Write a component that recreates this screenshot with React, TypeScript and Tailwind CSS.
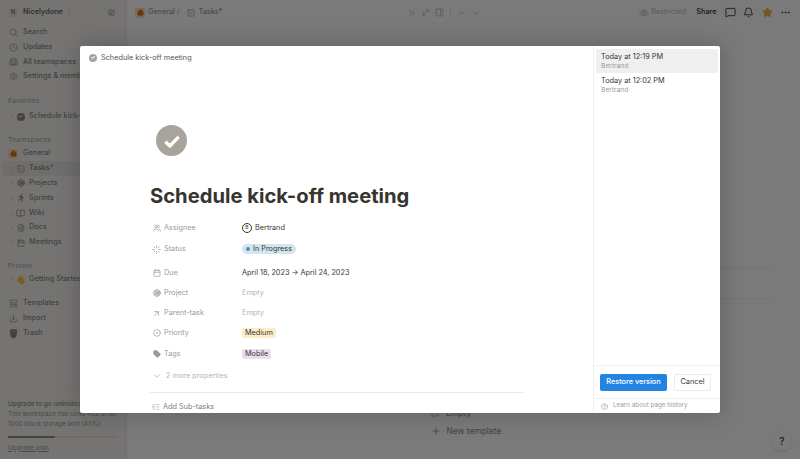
import React from 'react';
import {
  ArrowUpRight, Bell, ChevronDown, ChevronRight, ChevronUp, ChevronsRight, ChevronsUpDown, Download,
  Calendar, CircleHelp, Clock, Ellipsis, Eye, BookOpen, FileText, Home, Loader, MessageSquare,
  PanelRight, Plus, Search, Settings, SquareCheck, SquarePen, Star, Tag, Users, Building2, ListTree,
  MoveDiagonal, Target, LayoutTemplate, Square, CircleDot,
} from 'lucide-react';
import { FaRunning } from 'react-icons/fa';
import { BsTrash2Fill } from 'react-icons/bs';

const NavRow = ({ icon: Icon, label }: { icon: any; label: string }) => (
  <div className="flex h-[14.8px] items-center gap-[5px] pl-[9px]">
    <Icon size={9} strokeWidth={1.7} className="shrink-0 text-[#8c8b87]" />
    <span className="whitespace-nowrap font-medium text-[#8c8b87]">{label}</span>
  </div>
);

const TreeRow = ({ icon, label, active }: { icon: React.ReactNode; label: string; active?: boolean }) => (
  <div className={`flex h-[14.8px] items-center ${active ? 'mx-[2px] rounded-[2px] bg-[#e8e7e4] pl-[6px] font-semibold' : 'pl-[8px] font-medium'}`}>
    <ChevronRight size={7} strokeWidth={2} className="shrink-0 text-[#b5b4b0]" />
    <span className="mr-[3px] flex w-[11px] shrink-0 justify-center">{icon}</span>
    <span className="whitespace-nowrap text-[#8c8b87]">{label}</span>
  </div>
);

const SectionLabel = ({ children, className }: { children: string; className: string }) => (
  <div className={`pl-[8px] text-[6.8px] font-medium tracking-[0.2px] text-[#b0afab] ${className}`}>{children}</div>
);

const Property = ({ icon, label, children, className = '' }: { icon: React.ReactNode; label: string; children: React.ReactNode; className?: string }) => (
  <div className={`flex h-[20px] items-center ${className}`}>
    <div className="flex w-[92px] shrink-0 items-center gap-[3px] pl-[2px] text-[#9b9a97]">
      <span className="flex w-[9px] justify-center">{icon}</span>
      <span>{label}</span>
    </div>
    <div className="flex items-center">{children}</div>
  </div>
);

export default function App() {
  const iconGrey = 'text-[#b5b4b0]';
  const sideIcon = 'text-[#8c8b87]';
  return (
    <div className="relative flex h-[459px] w-[800px] overflow-hidden bg-white text-[7.3px] text-[#37352f] [font-family:Inter,'Liberation_Sans',sans-serif]">
      {/* sidebar */}
      <aside className="flex h-full w-[127px] shrink-0 flex-col border-r border-[#ecebe8] bg-[#f4f3f0]">
        <div className="flex h-[25px] items-center pl-[9px] pr-[7px]">
          <span className="mr-[6px] flex h-[8px] w-[8px] items-center justify-center rounded-[1px] bg-[#e3e2de] text-[5.5px] font-medium text-[#6b6a67]">N</span>
          <span className="font-semibold text-[#6e6d69]">Nicelydone</span>
          <ChevronsUpDown size={7} className="ml-[3px] text-[#b5b4b0]" />
          <span className="ml-auto flex h-[16px] w-[16px] items-center justify-center rounded-full border border-[#ecebe8]">
            <SquarePen size={7} className="text-[#6e6d69]" />
          </span>
        </div>
        <NavRow icon={Search} label="Search" />
        <NavRow icon={Clock} label="Updates" />
        <NavRow icon={Building2} label="All teamspaces" />
        <NavRow icon={Settings} label="Settings & members" />
        <SectionLabel className="mb-[2px] mt-[11px] h-[12px] leading-[12px]">Favorites</SectionLabel>
        <TreeRow icon={<span className="flex h-[8px] w-[8px] items-center justify-center rounded-full bg-[#8c8b87] text-[5px] font-bold text-white">✓</span>} label="Schedule kick-off meeting" />
        <SectionLabel className="mb-[0.5px] mt-[10px] h-[12px] leading-[12px]">Teamspaces</SectionLabel>
        <div className="flex h-[14.8px] items-center pl-[8px]">
          <span className="mr-[5px] flex h-[10px] w-[10px] items-center justify-center rounded-[2px] bg-[#fbdcc0]"><Home size={7} fill="#d9730d" className="text-[#d9730d]" /></span>
          <span className="font-medium text-[#8c8b87]">General</span>
        </div>
        <TreeRow active icon={<SquareCheck size={8} className={sideIcon} />} label="Tasks*" />
        <TreeRow icon={<Target size={8} strokeWidth={2.6} className={sideIcon} />} label="Projects" />
        <TreeRow icon={<FaRunning size={8} className={sideIcon} />} label="Sprints" />
        <TreeRow icon={<BookOpen size={9} className={sideIcon} />} label="Wiki" />
        <TreeRow icon={<FileText size={8} className={sideIcon} />} label="Docs" />
        <TreeRow icon={<Calendar size={8} className={sideIcon} />} label="Meetings" />
        <SectionLabel className="mb-[0.5px] mt-[10px] h-[12px] leading-[12px]">Private</SectionLabel>
        <TreeRow icon={<span className="text-[8px] leading-none">👋</span>} label="Getting Started" />
        <div className="h-[9px]" />
        <NavRow icon={LayoutTemplate} label="Templates" />
        <NavRow icon={Download} label="Import" />
        <NavRow icon={BsTrash2Fill} label="Trash" />
        <div className="mt-auto h-[70px] border-t border-[#ecebe8] px-[8px] pt-[9px] text-[6.4px] text-[#9b9a97]">
          <div className="font-medium leading-[10px] text-[#8c8b87]">Upgrade to go unlimited</div>
          <div className="mt-[1px] leading-[9.5px]">This workspace has used 432 of its 1000 block storage limit (43%).</div>
          <div className="mt-[6.5px] h-[2px] w-full rounded-full bg-[#e3e2de]">
            <div className="h-full w-[43%] rounded-full bg-[#8c8b87]" />
          </div>
          <div className="mt-[6px] underline">Upgrade plan</div>
        </div>
      </aside>

      {/* page behind the dialog */}
      <main className="flex min-w-0 flex-1 flex-col">
        <header className="flex h-[25px] items-center pl-[8px]">
          <span className="mr-[3px] flex h-[10px] w-[10px] items-center justify-center rounded-[2px] bg-[#fbdcc0]"><Home size={7} fill="#d9730d" className="text-[#d9730d]" /></span>
          <span className="text-[#8c8b87]">General</span>
          <span className="mx-[2px] text-[#b5b4b0]">/</span>
          <SquareCheck size={8} className="ml-[5px] mr-[4px] text-[#8c8b87]" />
          <span className="text-[#8c8b87]">Tasks*</span>
          <div className="ml-auto flex items-center">
            <ChevronsRight size={10} className={iconGrey} />
            <MoveDiagonal size={9} className={`ml-[4.5px] ${iconGrey}`} />
            <PanelRight size={9} className={`ml-[5px] ${iconGrey}`} />
            <span className="mx-[6px] h-[8px] w-px bg-[#e3e2de]" />
            <ChevronUp size={10} className={iconGrey} />
            <ChevronDown size={10} className={`ml-[4px] ${iconGrey}`} />
          </div>
          <div className="ml-[158px] flex items-center pr-[9px]">
            <Eye size={10} className={iconGrey} />
            <span className="ml-[2px] w-[35px] whitespace-nowrap text-[#bebdb9]">Restricted</span>
            <span className="ml-[10px] font-medium">Share</span>
            <MessageSquare size={11} className="ml-[8.5px] text-[#37352f]" />
            <Bell size={11} className="ml-[7px] text-[#37352f]" />
            <Star size={11} fill="#e9b949" className="ml-[8px] text-[#e9b949]" />
            <Ellipsis size={11} className="ml-[7px] text-[#37352f]" />
          </div>
        </header>
        <div className="ml-[273px] mr-[27px] mt-[242px] h-[32px] border-y border-[#f4f3f1]" />
        <div className="mb-[19px] mt-auto pl-[304px] text-[8.4px] text-[#8c8b87]">
          <div className="flex h-[18px] items-center gap-[7px]"><Square size={8} /><span>Empty</span></div>
          <div className="flex h-[18px] items-center gap-[5.5px]"><Plus size={10} /><span>New template</span></div>
        </div>
      </main>
      <button className="absolute left-[772px] top-[431px] flex h-[20px] w-[20px] items-center justify-center rounded-full bg-white/20 text-[10px] font-medium text-[#37352f] shadow-sm">?</button>

      {/* scrim */}
      <div className="absolute inset-0 bg-black/[0.52]" />

      {/* version history dialog */}
      <div className="absolute left-[80px] top-[46px] flex h-[367px] w-[640px] rounded-[2px] bg-white shadow-[0_0_24px_rgba(0,0,0,0.22)]">
        <section className="relative min-w-0 flex-1 overflow-hidden">
          <div className="flex h-[23px] items-center pl-[9px] pt-[1px] text-[#55534e]">
            <span className="mr-[4px] flex h-[8px] w-[8px] items-center justify-center rounded-full bg-[#a8a49c] text-[5px] font-bold text-white">✓</span>
            <span>Schedule kick-off meeting</span>
          </div>
          <div className="pl-[70px] pr-[69px]">
            <div className="ml-[6px] mt-[56px] flex h-[31px] w-[31px] items-center justify-center rounded-full bg-[#a8a49c]">
              <svg viewBox="0 0 24 24" width="20" height="20" fill="none" stroke="white" strokeWidth="4"><path d="M4 13l5.5 5L20 7" /></svg>
            </div>
            <h1 className="mt-[26px] h-[28px] whitespace-nowrap text-[20.2px] font-bold leading-[28px] text-[#37352f]">Schedule kick-off meeting</h1>
            <div className="mt-[8px]">
              <Property label="Assignee" icon={<Users size={8} />}>
                <span className="mr-[3px] flex h-[10px] w-[10px] items-center justify-center rounded-full border border-[#37352f] text-[5px]">B</span>
                <span className="text-[#37352f]">Bertrand</span>
              </Property>
              <Property className="mt-[1px]" label="Status" icon={<Loader size={9} />}>
                <span className="flex h-[10.5px] items-center rounded-full bg-[#d3e5ef] px-[4px]">
                  <span className="mr-[3px] h-[4px] w-[4px] rounded-full bg-[#4f8fc4]" />In Progress
                </span>
              </Property>
              <Property className="mt-[4px]" label="Due" icon={<Calendar size={8} />}>April 18, 2023 → April 24, 2023</Property>
              <Property label="Project" icon={<Target size={8} strokeWidth={2.6} />}><span className="text-[#b5b4b0]">Empty</span></Property>
              <Property label="Parent-task" icon={<ArrowUpRight size={9} />}><span className="text-[#b5b4b0]">Empty</span></Property>
              <Property label="Priority" icon={<CircleDot size={8} />}>
                <span className="flex h-[10.5px] items-center rounded-[2px] bg-[#fdecc8] px-[3px]">Medium</span>
              </Property>
              <Property className="mt-[1px]" label="Tags" icon={<Tag size={8} fill="#9b9a97" />}>
                <span className="flex h-[10.5px] items-center rounded-[2px] bg-[#e8deee] px-[3px]">Mobile</span>
              </Property>
              <div className="mt-[2px] flex h-[20px] items-center pl-[2px] text-[#b5b4b0]">
                <ChevronDown size={10} className="mr-[4px]" />2 more properties
              </div>
            </div>
            <div className="mt-[6px] border-t border-[#ecebe8]" />
            <div className="mt-[9px] flex items-center gap-[3px] pl-[2px] text-[#7d7c78]">
              <ListTree size={8} className={iconGrey} />Add Sub-tasks
            </div>
          </div>
        </section>
        <aside className="flex w-[127px] shrink-0 flex-col border-l border-[#f1f0ee]">
          <div className="px-[2px] pt-[3px]">
            <div className="h-[24px] rounded-[2px] bg-[#efefef] pl-[5px] pt-[2px]">
              <div className="leading-[11px] text-[#37352f]">Today at 12:19 PM</div>
              <div className="text-[6.7px] leading-[8px] text-[#9b9a97]">Bertrand</div>
            </div>
            <div className="h-[24px] pl-[5px] pt-[2px]">
              <div className="leading-[11px] text-[#37352f]">Today at 12:02 PM</div>
              <div className="text-[6.7px] leading-[8px] text-[#9b9a97]">Bertrand</div>
            </div>
          </div>
          <div className="mt-auto flex h-[33px] items-center border-t border-[#f1f0ee] pl-[6px]">
            <button className="h-[17px] w-[67px] rounded-[2px] bg-[#2383e2] font-medium text-white">Restore version</button>
            <button className="ml-[7px] h-[17px] w-[37px] rounded-[2px] border border-[#ecebe8] text-[#37352f]">Cancel</button>
          </div>
          <div className="flex h-[15px] items-center gap-[5px] border-t border-[#f1f0ee] pl-[7px] text-[6.3px] text-[#9b9a97]">
            <CircleHelp size={7} />Learn about page history
          </div>
        </aside>
      </div>
    </div>
  );
}
